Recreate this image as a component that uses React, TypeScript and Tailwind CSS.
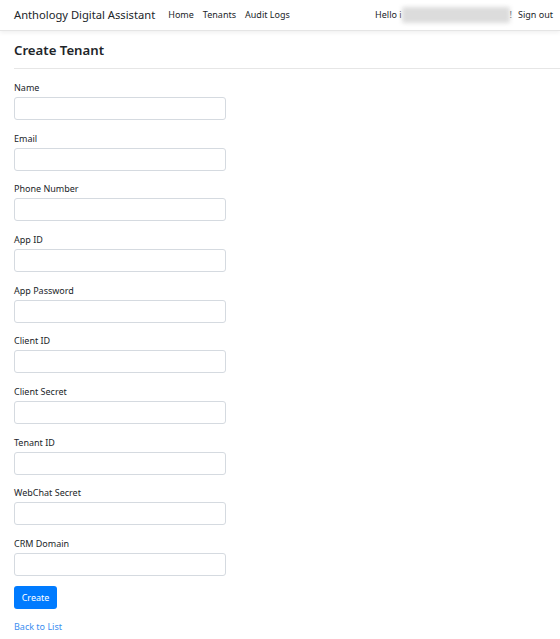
import React from "react";

const fields = [
  "Name",
  "Email",
  "Phone Number",
  "App ID",
  "App Password",
  "Client ID",
  "Client Secret",
  "Tenant ID",
  "WebChat Secret",
  "CRM Domain",
];

export default function App() {
  return (
    <div
      className="w-[560px] h-[639px] bg-white text-[#212529] overflow-hidden relative"
      style={{ fontFamily: '"Noto Sans", "Open Sans", sans-serif' }}
    >
      <nav className="h-[31px] flex items-center bg-white border-b border-[#e5e5e5] shadow-[0_2px_4px_rgba(0,0,0,0.06)] px-[14px]">
        <span className="text-[11.2px] text-[#212529]">Anthology Digital Assistant</span>
        <div className="flex items-center gap-[9px] ml-[13px] text-[9px] text-[#212529]">
          <span>Home</span>
          <span>Tenants</span>
          <span>Audit Logs</span>
        </div>
        <div className="ml-auto flex items-center text-[9px] text-[#212529] mr-[-7px]">
          <span>Hello i</span>
          <span className="inline-block w-[108px] h-[16px] bg-[#dcdcdc] blur-[2px] rounded-[2px]" />
          <span>!</span>
          <span className="ml-[6px]">Sign out</span>
        </div>
      </nav>
      <div className="pl-[14px]">
        <h1 className="text-[13.2px] font-semibold leading-[20px] mt-[9px] text-[#212529]">Create Tenant</h1>
        <div className="h-px bg-[#e6e6e6] mt-[8px]" />
        <div className="mt-[11px]">
          {fields.map((f) => (
            <div key={f} className="h-[50.67px]">
              <div className="text-[9px] leading-[15px] text-[#212529]">{f}</div>
              <div className="mt-[2px] w-[212px] h-[23px] border border-[#d5dae0] rounded-[3px] bg-white" />
            </div>
          ))}
        </div>
        <button className="mt-[-0.7px] w-[43px] h-[23px] bg-[#007bff] rounded-[3px] text-white text-[9px] flex items-center justify-center">
          Create
        </button>
        <div className="mt-[11px] text-[9px] text-[#3b8ef0]">Back to List</div>
      </div>
    </div>
  );
}
